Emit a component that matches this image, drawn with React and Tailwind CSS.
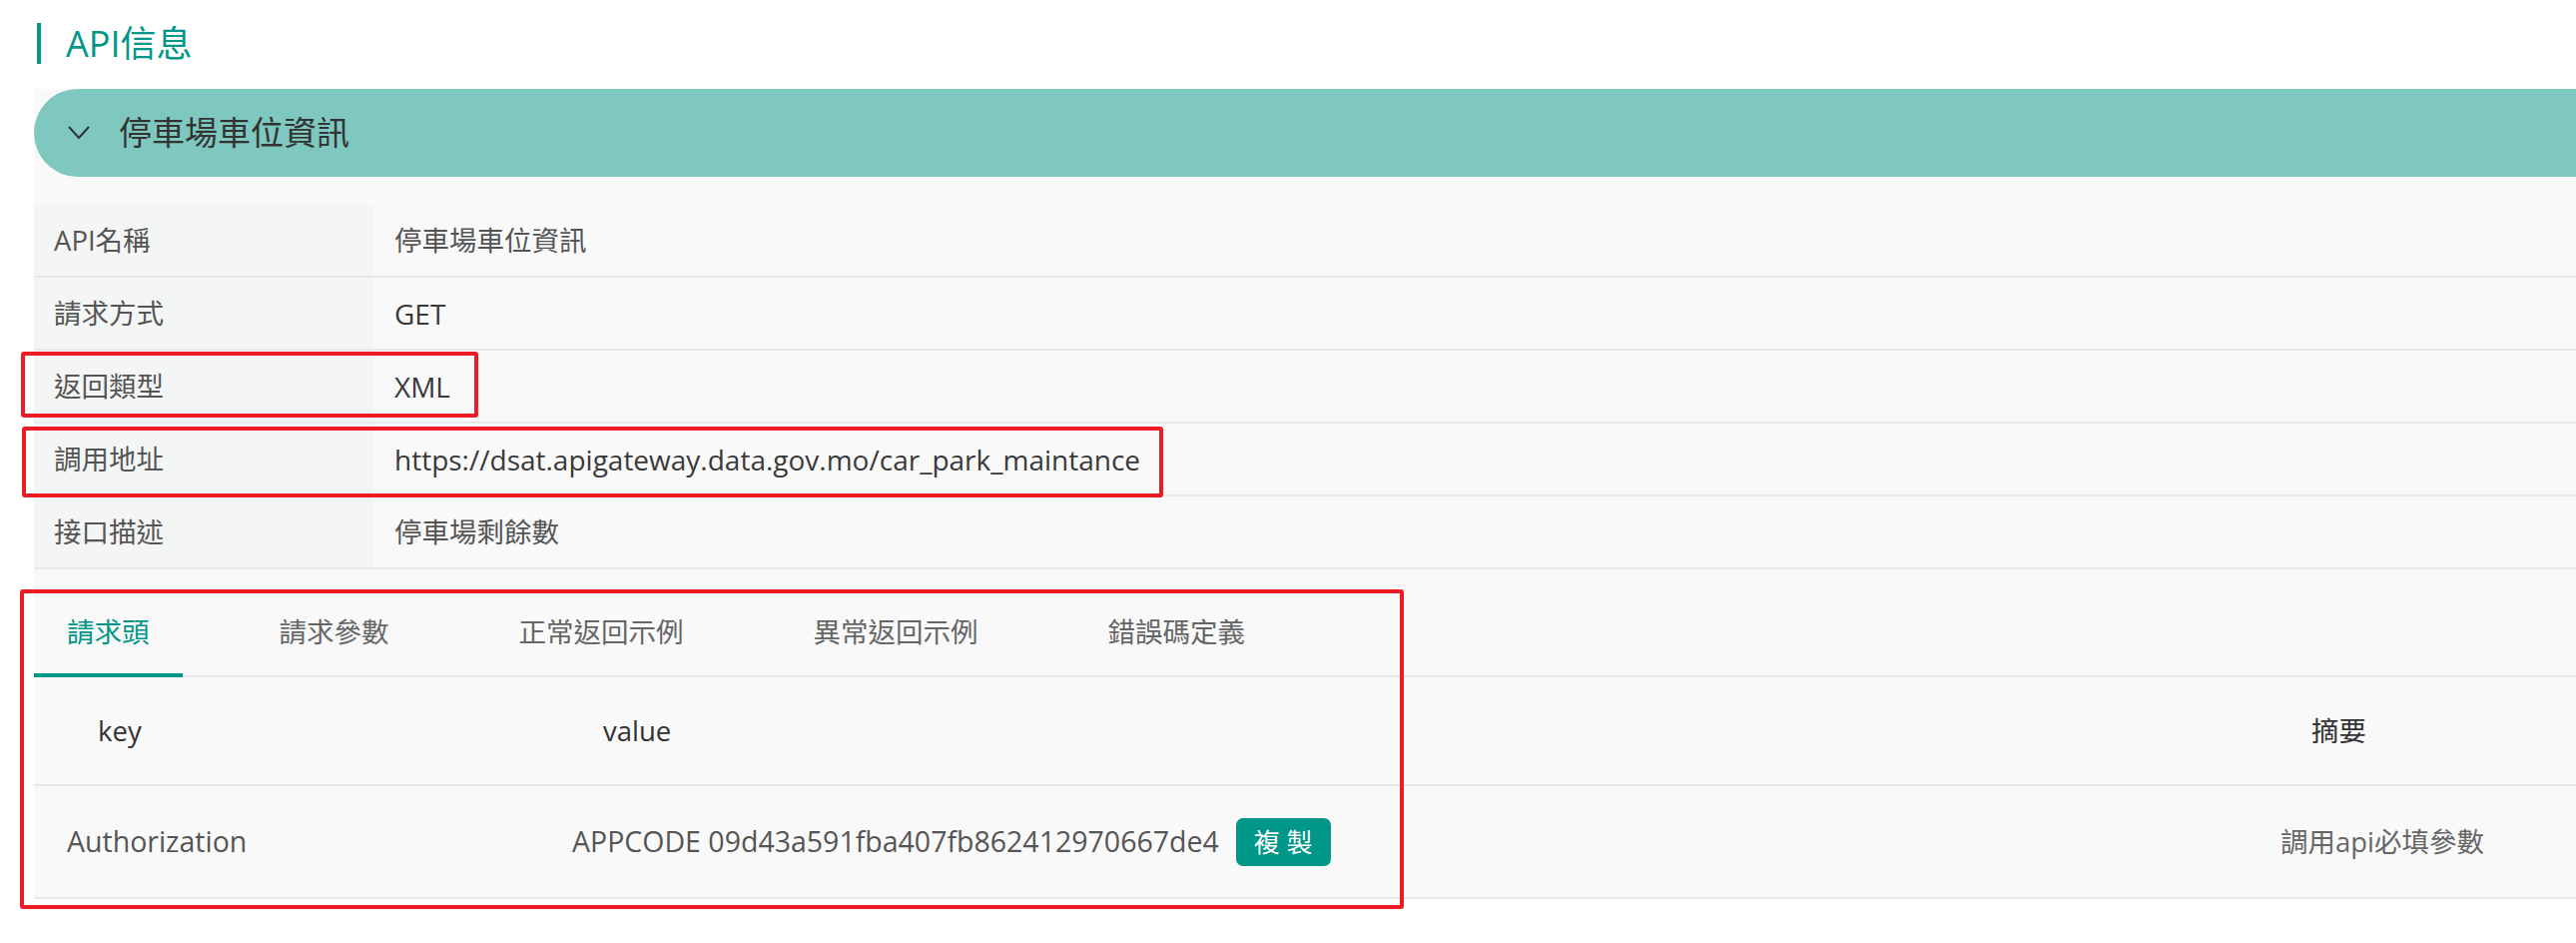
import { useState } from "react";

const font = { fontFamily: '"Open Sans", "Noto Sans CJK TC", sans-serif' };

const info = [
  { label: "API名稱", value: "停車場車位資訊" },
  { label: "請求方式", value: "GET", latin: true },
  { label: "返回類型", value: "XML", latin: true },
  { label: "調用地址", value: "https://dsat.apigateway.data.gov.mo/car_park_maintance", latin: true },
  { label: "接口描述", value: "停車場剩餘數" },
];

const tabs = ["請求頭", "請求參數", "正常返回示例", "異常返回示例", "錯誤碼定義"];

function Chevron() {
  return (
    <svg width="22" height="14" viewBox="0 0 22 14" fill="none">
      <path d="M1.5 1.5 L11 12 L20.5 1.5" stroke="#333" strokeWidth="2" strokeLinecap="round" strokeLinejoin="round" />
    </svg>
  );
}

function App() {
  const [active, setActive] = useState(0);

  return (
    <div className="relative w-[2580px] h-[944px] overflow-hidden bg-white" style={font}>
      {/* title */}
      <div className="flex items-center pt-[23px] pl-[37px]">
        <div className="w-[4px] h-[41px] bg-[#009688]" />
        <h2 className="ml-[25px] text-[36px] leading-none text-[#009688]">API信息</h2>
      </div>

      {/* card */}
      <div className="ml-[34px] mt-[25px] h-[811px] bg-[#f9f9f9]">
        <div className="flex items-center h-[88px] pl-[34px] rounded-l-[44px] bg-[#7fc8c0]">
          <Chevron />
          <span className="ml-[29px] text-[33px] text-[#333]">停車場車位資訊</span>
        </div>

        <div className="mt-[28px]">
          {info.map((row) => (
            <div key={row.label} className="flex h-[73px] border-b-2 border-[#e8e8e8] text-[27.5px]">
              <div className="flex items-center w-[340px] pl-[20px] bg-[#f4f6f6] text-[#555]">
                {row.label}
              </div>
              <div className={`flex items-center pl-[21px] ${row.latin ? "text-[28px] text-[#3a3a3a]" : "text-[#555]"}`}>
                {row.value}
              </div>
            </div>
          ))}
        </div>

        {/* tabs */}
        <div className="mt-[20px] flex h-[88px] border-b-2 border-[#e8e8e8] gap-[64px]">
          {tabs.map((t, i) => (
            <button
              key={t}
              onClick={() => setActive(i)}
              className={`relative flex items-center h-full px-[33px] text-[27.5px] ${
                i === active ? "text-[#009688]" : "text-[#666]"
              }`}
            >
              {t}
              {i === active && <span className="absolute left-0 right-0 bottom-[-2px] h-[4px] bg-[#009688]" />}
            </button>
          ))}
        </div>

        {/* table */}
        <div className="grid grid-cols-[506px_1711px_1fr] h-[109px] border-b-2 border-[#e8e8e8] items-center text-[27.5px] text-[#333]">
          <div className="pl-[64px]">key</div>
          <div className="pl-[64px]">value</div>
          <div className="pl-[64px]">摘要</div>
        </div>
        <div className="grid grid-cols-[506px_1711px_1fr] h-[113px] border-b-2 border-[#e8e8e8] items-center text-[27.5px] text-[#555]">
          <div className="pl-[33px] text-[28.5px]">Authorization</div>
          <div className="pl-[33px] flex items-center">
            <span className="text-[28.5px]">APPCODE 09d43a591fba407fb862412970667de4</span>
            <button className="ml-[17px] w-[95px] h-[48px] rounded-[7px] bg-[#009688] text-white text-[26px] leading-none">
              複 製
            </button>
          </div>
          <div className="pl-[33px] text-[#666]">調用api必填參數</div>
        </div>
      </div>

      {/* annotation boxes */}
      <div className="absolute left-[21px] top-[352px] w-[458px] h-[66px] border-4 border-[#ed1c24] rounded-[3px] pointer-events-none" />
      <div className="absolute left-[22px] top-[427px] w-[1143px] h-[71px] border-4 border-[#ed1c24] rounded-[3px] pointer-events-none" />
      <div className="absolute left-[20px] top-[590px] w-[1386px] h-[320px] border-4 border-[#ed1c24] rounded-[3px] pointer-events-none" />
    </div>
  );
}

export default App;
